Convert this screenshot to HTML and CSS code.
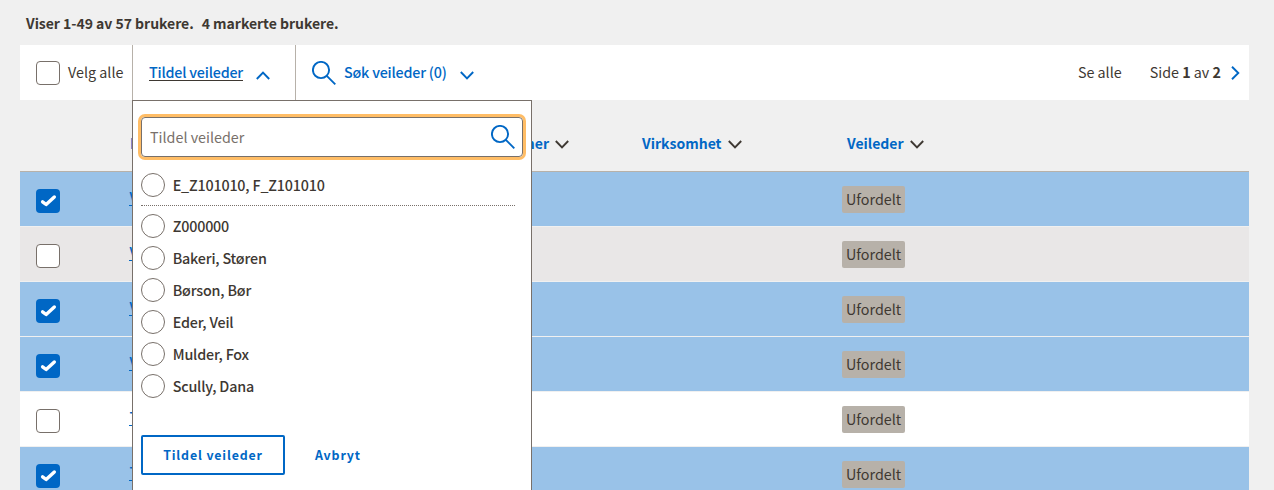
FILE: index.html
```html
<!DOCTYPE html>
<html lang="no">
<head>
<meta charset="utf-8">
<title>Oversikt</title>
<link rel="stylesheet" href="styles.css">
</head>
<body>
<svg width="0" height="0" class="defs">
  <symbol id="search" viewBox="0 0 24 24"><circle cx="9" cy="9" r="8.1" fill="none" stroke="currentColor" stroke-width="1.9"/><path d="M14.8 14.8L23.3 23.3" fill="none" stroke="currentColor" stroke-width="1.9"/></symbol>
  <symbol id="down" viewBox="0 0 14 9"><path d="M.8 1L7 7.3L13.2 1" fill="none" stroke="currentColor" stroke-width="1.9"/></symbol>
  <symbol id="up" viewBox="0 0 14 9"><path d="M.8 8L7 1.7L13.2 8" fill="none" stroke="currentColor" stroke-width="1.9"/></symbol>
  <symbol id="right" viewBox="0 0 9 14"><path d="M1 .8L7.3 7L1 13.2" fill="none" stroke="currentColor" stroke-width="1.9"/></symbol>
  <symbol id="check" viewBox="0 0 24 24"><path d="M6.6 12.8L10.1 15.5L18.3 8" fill="none" stroke="#fff" stroke-width="3.4" stroke-linecap="round" stroke-linejoin="round"/></symbol>
</svg>
<main class="page">
  <h1 class="summary"><span class="summary-count">Viser 1-49 av 57 brukere.</span><span class="summary-marked">4 markerte brukere.</span></h1>
  <section class="toolbar">
    <label class="select-all"><span class="box"></span><span class="text">Velg alle</span></label>
    <div class="assign">
      <a class="assign-link">Tildel veileder</a><svg class="chev"><use href="#up"/></svg>
      <div class="menu">
        <div class="field"><span class="placeholder">Tildel veileder</span><svg class="search"><use href="#search"/></svg></div>
        <div class="option first"><span class="radio"></span><span>E_Z101010, F_Z101010</span></div>
        <div class="option"><span class="radio"></span><span>Z000000</span></div>
        <div class="option"><span class="radio"></span><span>Bakeri, Støren</span></div>
        <div class="option"><span class="radio"></span><span>Børson, Bør</span></div>
        <div class="option"><span class="radio"></span><span>Eder, Veil</span></div>
        <div class="option"><span class="radio"></span><span>Mulder, Fox</span></div>
        <div class="option"><span class="radio"></span><span>Scully, Dana</span></div>
        <div class="actions"><button class="primary">Tildel veileder</button><button class="cancel">Avbryt</button></div>
      </div>
    </div>
    <div class="find"><svg class="search"><use href="#search"/></svg><span class="find-text">Søk veileder (0)</span><svg class="chev"><use href="#down"/></svg></div>
    <div class="paging"><span class="text">Se alle</span><span class="pages text">Side <b>1</b> av <b>2</b></span><svg class="next"><use href="#right"/></svg></div>
  </section>
  <section class="table">
    <div class="grid head"><span></span><span class="name">N</span><span class="number">Fødselsnummer<svg class="chev"><use href="#down"/></svg></span><span>Virksomhet<svg class="chev"><use href="#down"/></svg></span><span>Veileder<svg class="chev"><use href="#down"/></svg></span></div>
    <div class="grid row marked"><span class="box on"><svg><use href="#check"/></svg></span><a class="name">Vik</a><span></span><span></span><span class="tag">Ufordelt</span></div>
    <div class="grid row shade"><span class="box"></span><a class="name">Vik</a><span></span><span></span><span class="tag">Ufordelt</span></div>
    <div class="grid row marked"><span class="box on"><svg><use href="#check"/></svg></span><a class="name">Vik</a><span></span><span></span><span class="tag">Ufordelt</span></div>
    <div class="grid row marked"><span class="box on"><svg><use href="#check"/></svg></span><a class="name">Vik</a><span></span><span></span><span class="tag">Ufordelt</span></div>
    <div class="grid row"><span class="box"></span><a class="name">Ta</a><span></span><span></span><span class="tag">Ufordelt</span></div>
    <div class="grid row marked"><span class="box on"><svg><use href="#check"/></svg></span><a class="name">Ta</a><span></span><span></span><span class="tag">Ufordelt</span></div>
  </section>
</main>
</body>
</html>
```

FILE: styles.css
```css
* { box-sizing: border-box; }
body { margin: 0; background: #f0f0f0; color: #3e3832; font: 14.32px/22px "Noto Sans CJK SC", "Noto Sans", sans-serif; white-space: nowrap; overflow: hidden; height: 490px; }
.defs { position: absolute; }
svg { flex: none; display: block; }
.page { height: 490px; overflow: hidden; padding: 0 25px 0 20px; }
.summary { margin: 0; height: 45px; padding: 12px 0 0 6px; display: flex; gap: 8px; font-size: 14px; font-weight: 700; line-height: 22px; letter-spacing: -.03px; }
.toolbar { height: 55px; background: #fff; display: flex; align-items: stretch; }
.select-all { width: 112px; padding-left: 16px; display: flex; align-items: center; gap: 8px; }
.text { padding-bottom: 2px; }
.box { width: 24px; height: 24px; flex: none; border: 1px solid #78706a; border-radius: 4px; background: #fff; }
.box.on { border: 0; background: #0067c5; }
.box svg { width: 24px; height: 24px; }
.assign { position: relative; width: 163px; padding-left: 16px; border-left: 1px solid #b7b1a9; display: flex; align-items: center; color: #0067c5; }
.assign-link { font-weight: 500; border-bottom: 1px solid #3e3832; line-height: 16px; letter-spacing: -.2px; }
.chev { width: 14px; height: 9px; }
.assign > .chev { margin: 5px 0 0 13px; }
.search { width: 24px; height: 24px; color: #0067c5; }
.find { padding-left: 16px; border-left: 1px solid #b7b1a9; display: flex; align-items: center; color: #0067c5; font-weight: 500; letter-spacing: -.2px; }
.find-text { margin-left: 8px; padding-bottom: 2px; }
.find .chev { margin: 5px 0 0 13px; }
.paging { margin-left: auto; padding-right: 9px; display: flex; align-items: center; }
.pages { margin-left: 28px; }
.next { width: 9px; height: 14px; margin-left: 10px; color: #0067c5; }
.menu { position: absolute; z-index: 2; left: -1px; top: 55px; width: 400px; height: 420px; padding: 16px 8px; background: #fff; border: 1px solid #78706a; color: #3e3832; }
.field { height: 40px; border: 1px solid #78706a; border-radius: 4px; box-shadow: 0 0 0 3px #ffbd66; display: flex; align-items: center; justify-content: space-between; padding: 0 7px 0 8px; }
.placeholder { color: #78706a; }
.option { height: 32px; display: flex; align-items: center; gap: 7.7px; font-weight: 500; letter-spacing: -.18px; }
.option.first { height: 49px; margin: 0 8px 4px 0; padding-top: 8px; border-bottom: 1px dotted #78706a; }
.radio { width: 24px; height: 24px; flex: none; border: 1px solid #78706a; border-radius: 50%; }
.actions { display: flex; margin-top: 33px; gap: 30px; }
.actions button { margin: 0; height: 40px; background: none; color: #0067c5; font: 700 12.4px/20px "Noto Sans CJK SC", sans-serif; letter-spacing: .85px; padding: 0; border: 0; }
.actions .primary { width: 144px; border: 2px solid #0067c5; border-radius: 2px; }
.grid { display: grid; grid-template-columns: 93px 305px 208px 205px 1fr; padding-left: 16px; }
.head { height: 71px; padding-top: 32px; color: #0067c5; font-weight: 700; font-size: 14px; }
.head span { display: flex; height: 22px; align-items: center; }
.head .name { padding-left: 1px; }
.head .chev { color: #3e3832; margin: 2px 0 0 6px; }
.head .number { justify-content: flex-end; padding-right: 73px; }
.row { height: 55px; background: #fff; border-top: 1px solid #f0f0f0; padding-top: 17px; align-items: start; }
.row.marked { background: #99c2e8; }
.row.shade { background: #e9e7e7; }
.head + .row { border-top-color: #b7b1a9; }
.row .name { justify-self: start; padding-left: .5px; color: #0067c5; font-weight: 500; line-height: 16px; border-bottom: 1px solid #0067c5; }
.tag { justify-self: start; margin: -3px 0 0 -5px; height: 27px; line-height: 25px; padding: 0 4px; border-radius: 2px; background: #b7b1a9; }
```
